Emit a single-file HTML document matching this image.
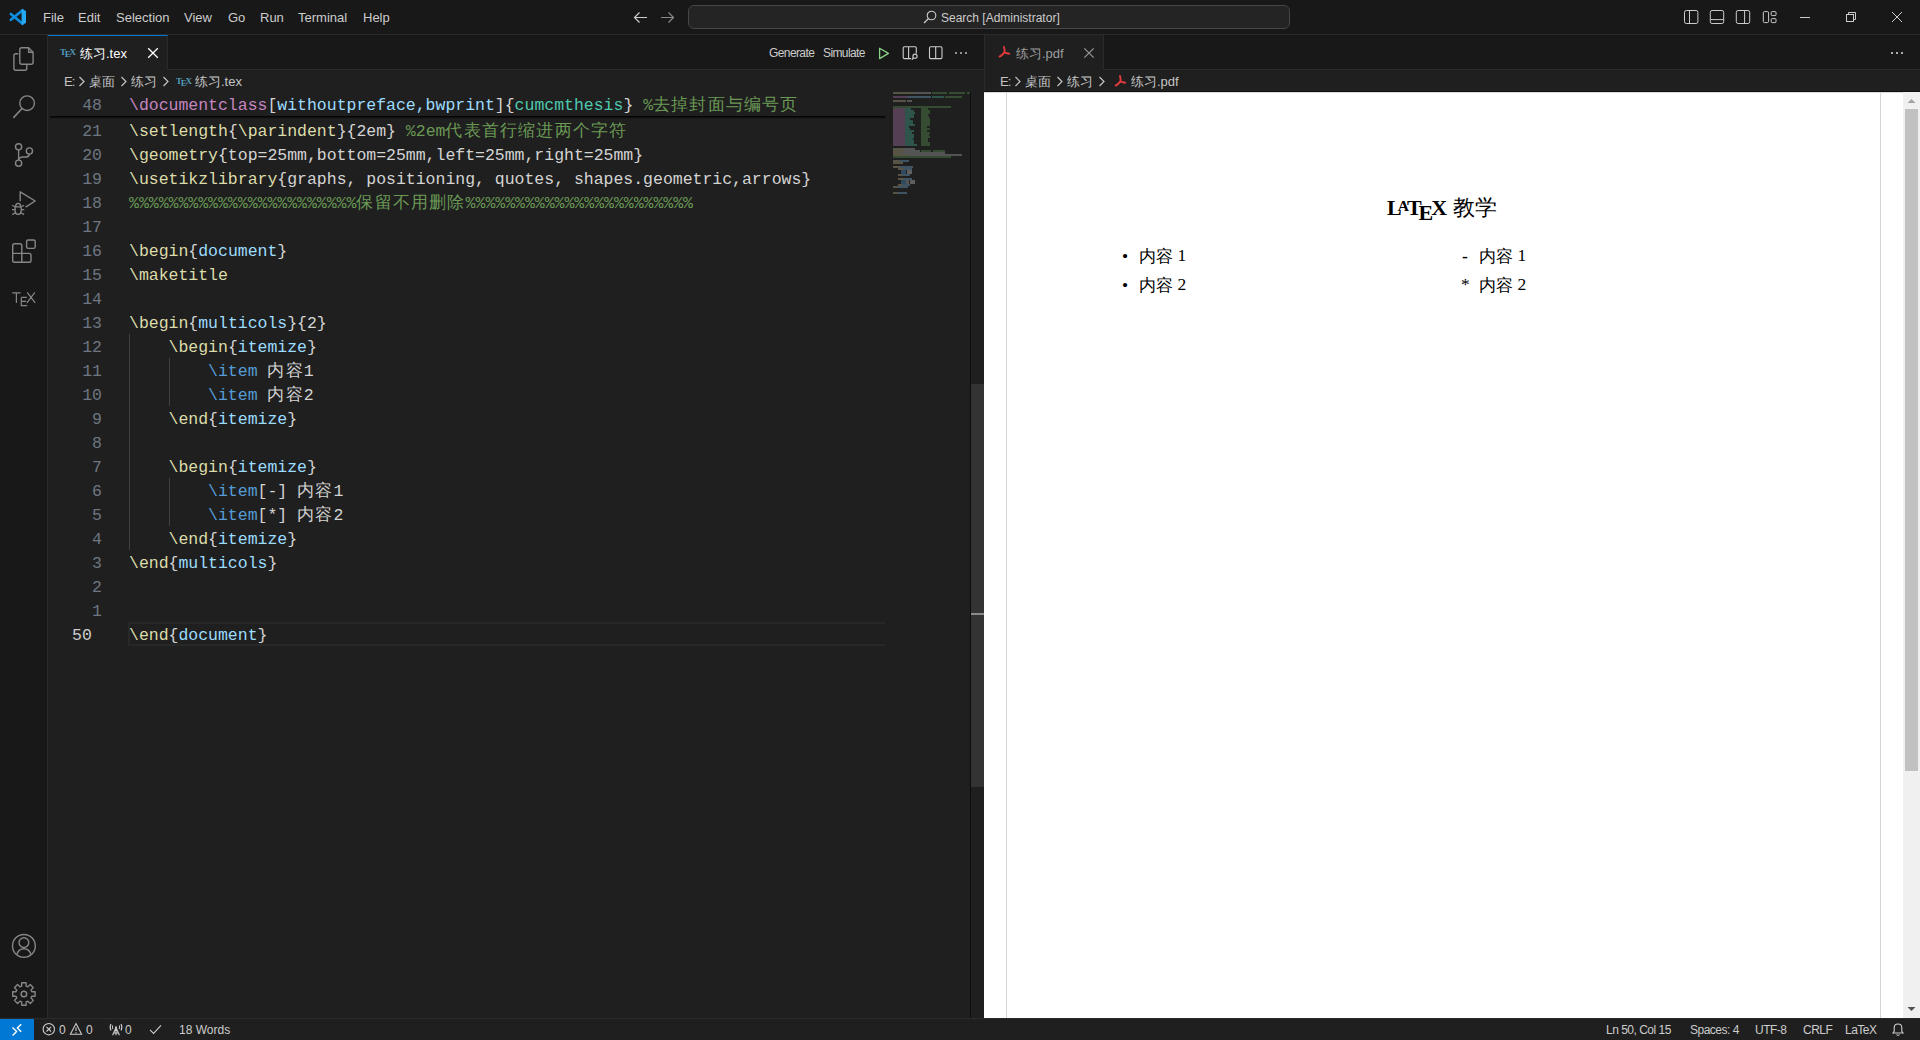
<!DOCTYPE html>
<html><head><meta charset="utf-8">
<style>
*{margin:0;padding:0;box-sizing:border-box}
html,body{width:1920px;height:1040px;overflow:hidden;background:#1f1f1f;font-family:"Liberation Sans",sans-serif;color:#cccccc}
.a{position:absolute}
#title{left:0;top:0;width:1920px;height:35px;background:#181818;border-bottom:1px solid #2b2b2b}
.menu{top:1px;height:34px;line-height:34px;font-size:13px;color:#cccccc}
#act{left:0;top:35px;width:48px;height:983px;background:#181818;border-right:1px solid #2b2b2b}
#status{left:0;top:1018px;width:1920px;height:22px;background:#1f1f1f;border-top:1px solid #2b2b2b;font-size:12px;color:#cccccc}
.st{top:0;height:22px;line-height:22px;white-space:nowrap}
.tabs{top:35px;height:35px;background:#181818;border-bottom:1px solid #2b2b2b}
.crumb{top:71px;height:22px;line-height:22px;font-size:13px;color:#c4c4c4;white-space:nowrap}
.code{font-family:"Liberation Mono",monospace;font-size:16.5px;white-space:pre;color:#d4d4d4;letter-spacing:-0.015px}
.ln{font-family:"Liberation Mono",monospace;font-size:16.5px;color:#6e7681;text-align:right;width:60px}
.row{position:absolute;height:24px;line-height:24px}
.cj{letter-spacing:1.2px}
.k{color:#c586c0}.p{color:#9cdcfe}.t{color:#4ec9b0}.c{color:#6a9955}.f{color:#dcdcaa}.b{color:#569cd6}.w{color:#d4d4d4}
svg{position:absolute;overflow:visible}
.pdfi{font-family:"Liberation Serif",serif;font-size:17.5px;color:#000;line-height:24px;white-space:nowrap}
.pcj{letter-spacing:-0.5px;font-size:17px;position:relative;top:1px;margin-right:1px}

</style></head><body>

<!-- TITLE BAR -->
<div id="title" class="a">
  <svg style="left:0;top:0" width="34" height="34" viewBox="0 0 34 34"><path d="M22.6 10.3 L10.9 19.8 M22.6 23.7 L10.9 14" stroke="#0f8ee0" stroke-width="2.7" stroke-linecap="round"/><path d="M21.6 9 L26 10.9 V23 L21.6 24.9 Z" fill="#26a9f4"/></svg>
  <div class="a menu" style="left:43px">File</div>
  <div class="a menu" style="left:78px">Edit</div>
  <div class="a menu" style="left:116px">Selection</div>
  <div class="a menu" style="left:184px">View</div>
  <div class="a menu" style="left:228px">Go</div>
  <div class="a menu" style="left:260px">Run</div>
  <div class="a menu" style="left:298px">Terminal</div>
  <div class="a menu" style="left:363px">Help</div>
  <!-- nav arrows -->
  <svg style="left:633px;top:11px" width="15" height="13" viewBox="0 0 15 13"><path d="M14 6.5H1.5M6.5 1.5L1.5 6.5L6.5 11.5" stroke="#cccccc" stroke-width="1.2" fill="none"/></svg>
  <svg style="left:660px;top:11px" width="15" height="13" viewBox="0 0 15 13"><path d="M1 6.5H13.5M8.5 1.5L13.5 6.5L8.5 11.5" stroke="#8a8a8a" stroke-width="1.2" fill="none"/></svg>
  <div class="a" style="left:688px;top:5px;width:602px;height:24px;background:#242424;border:1px solid #464646;border-radius:6px"></div>
  <svg style="left:923px;top:10px" width="14" height="14" viewBox="0 0 14 14"><circle cx="8.5" cy="5.5" r="4.3" stroke="#cccccc" stroke-width="1.1" fill="none"/><path d="M5.5 8.5L1 13" stroke="#cccccc" stroke-width="1.2"/></svg>
  <div class="a menu" style="left:941px;font-size:12px">Search [Administrator]</div>
  <svg style="left:0;top:0" width="1920" height="35" viewBox="0 0 1920 35" fill="none" stroke="#cccccc" stroke-width="1">
    <rect x="1684.5" y="10.5" width="13.4" height="13" rx="1.8"/>
    <path d="M1689.5 10.5 V23.5"/>
    <rect x="1710.3" y="10.5" width="13.4" height="13" rx="1.8"/>
    <path d="M1710.3 19.6 H1723.7"/>
    <rect x="1736.3" y="10.5" width="13.4" height="13" rx="1.8"/>
    <path d="M1744.6 10.5 V23.5"/>
    <rect x="1763.3" y="11.6" width="5.3" height="11" rx="1.2"/>
    <rect x="1771.2" y="11.6" width="4.8" height="4" rx="1"/>
    <rect x="1771.2" y="18.6" width="4.8" height="4" rx="1"/>
    <path d="M1800 17.5 H1810"/>
    <rect x="1846.5" y="14.5" width="7" height="7"/>
    <path d="M1848.5 14.5 V12.5 H1855.5 V19.5 H1853.5"/>
    <path d="M1892 12 L1902 22 M1902 12 L1892 22"/>
  </svg>
</div>

<!-- ACTIVITY BAR -->
<div id="act" class="a"></div>
<svg style="left:0;top:0" width="48" height="1040" viewBox="0 0 48 1040" fill="none" stroke="#868686" stroke-width="1.4" stroke-linejoin="round">
  <!-- files -->
  <path d="M18.3 53.7 H15.8 Q13.9 53.7 13.9 55.6 V68.3 Q13.9 70.2 15.8 70.2 H24.9 Q26.8 70.2 26.8 68.3 V64.9"/>
  <path d="M21.7 47.7 H28.6 L33.1 52.2 V62.3 Q33.1 64.2 31.2 64.2 H21.7 Q19.8 64.2 19.8 62.3 V49.6 Q19.8 47.7 21.7 47.7 Z"/>
  <path d="M28.6 47.9 V52.2 H33" />
  <!-- search -->
  <circle cx="27.1" cy="103.2" r="7.3"/>
  <path d="M22 108.5 L13.8 117.4" stroke-width="1.6" stroke-linecap="round"/>
  <!-- source control -->
  <circle cx="18.6" cy="146.8" r="3.1"/>
  <circle cx="18.6" cy="163.2" r="3.1"/>
  <circle cx="29.4" cy="151" r="3.1"/>
  <path d="M18.6 149.9 V160.1"/>
  <path d="M29.4 154.1 Q29.2 156.6 26.4 157 H22.4 Q18.8 157.4 18.6 160"/>
  <!-- run & debug -->
  <path d="M20.2 201.2 V191.8 L35.2 201 L25.6 207.2"/>
  <path d="M15.6 206.9 Q15.6 203.4 18.15 203.4 Q20.7 203.4 20.7 206.9 M15.1 206.9 H21.2 M15.1 206.9 V210.4 Q15.1 214.2 18.15 214.2 Q21.2 214.2 21.2 210.4 V206.9"/>
  <path d="M12.2 205.2 L15 206.8 M24.1 205.2 L21.3 206.8 M12 209.7 H15 M24.3 209.7 H21.3 M12.3 214.6 L15.2 212.8 M24 214.6 L21.1 212.8" stroke-width="1.3"/>
  <!-- extensions -->
  <rect x="26.6" y="240" width="8.6" height="8.4" rx="1.6"/>
  <path d="M14.5 243.8 H20 Q21.8 243.8 21.8 245.6 V253.4 H29.2 Q31 253.4 31 255.2 V260.4 Q31 262.2 29.2 262.2 H14.5 Q12.7 262.2 12.7 260.4 V245.6 Q12.7 243.8 14.5 243.8 Z M12.7 253.4 H21.8 V262.2"/>
  <!-- tex -->
  <path d="M12.2 292.9 H20.6 M16.4 292.9 V302.9 M21.3 297.4 V305.6 H27.2 M21.3 297.4 H26.8 M21.3 301.4 H26.2 M27.2 292.3 L35.2 302.9 M34.9 292.3 L26.9 302.9" stroke-width="1.2" stroke-linejoin="miter"/>
  <!-- account -->
  <circle cx="23.9" cy="945.9" r="11.4"/>
  <circle cx="23.9" cy="942.6" r="4.9"/>
  <path d="M16.8 954.6 Q18.6 948.8 23.9 948.8 Q29.2 948.8 31 954.6"/>
  <!-- settings -->
  <path d="M21.64 986.12 L21.72 982.81 L26.08 982.81 L26.16 986.12 L27.88 986.83 L30.27 984.55 L33.35 987.63 L31.07 990.02 L31.78 991.74 L35.09 991.82 L35.09 996.18 L31.78 996.26 L31.07 997.98 L33.35 1000.37 L30.27 1003.45 L27.88 1001.17 L26.16 1001.88 L26.08 1005.19 L21.72 1005.19 L21.64 1001.88 L19.92 1001.17 L17.53 1003.45 L14.45 1000.37 L16.73 997.98 L16.02 996.26 L12.71 996.18 L12.71 991.82 L16.02 991.74 L16.73 990.02 L14.45 987.63 L17.53 984.55 L19.92 986.83 Z"/>
  <circle cx="23.9" cy="994" r="2.8"/>
</svg>

<!-- LEFT EDITOR GROUP -->
<div class="a tabs" style="left:48px;width:936px"></div>
<div class="a" style="left:48px;top:35px;width:120px;height:35px;background:#1f1f1f;border-top:1px solid #0078d4;border-right:1px solid #2b2b2b"></div>
<div class="a" style="left:48px;top:92px;width:936px;height:926px;background:#1f1f1f"></div>
<!-- tab 1 content -->
<div class="a" style="left:60px;top:47px;font-family:'Liberation Serif',serif;font-size:9px;font-weight:bold;color:#519aba;white-space:nowrap;letter-spacing:-1.3px">T<span style="position:relative;top:2px">E</span>X</div>
<div class="a" style="left:80px;top:36px;height:35px;line-height:35px;font-size:13px;color:#ffffff;white-space:nowrap">练习.tex</div>
<svg style="left:147px;top:47px" width="12" height="12" viewBox="0 0 12 12"><path d="M1.2 1.2 L10.8 10.8 M10.8 1.2 L1.2 10.8" stroke="#ffffff" stroke-width="1.3"/></svg>
<!-- tab actions -->
<div class="a" style="left:769px;top:36px;height:35px;line-height:35px;font-size:12px;color:#cccccc;white-space:nowrap;letter-spacing:-0.6px">Generate</div>
<div class="a" style="left:823px;top:36px;height:35px;line-height:35px;font-size:12px;color:#cccccc;white-space:nowrap;letter-spacing:-0.6px">Simulate</div>
<svg style="left:0;top:0" width="984" height="70" viewBox="0 0 984 70" fill="none" stroke-width="1.1">
  <path d="M879.6 48.3 V58.6 L888.4 53.4 Z" stroke="#89d185" stroke-width="1.3" stroke-linejoin="round"/>
  <path d="M911 58.6 H904.3 Q903.2 58.6 903.2 57.5 V47.8 Q903.2 46.7 904.3 46.7 H915.2 Q916.3 46.7 916.3 47.8 V53.5 M908.6 46.7 V58.6" stroke="#cccccc"/>
  <circle cx="915" cy="56.2" r="2.1" stroke="#cccccc"/>
  <path d="M913.5 57.8 L911.8 59.6" stroke="#cccccc" stroke-width="1.3"/>
  <rect x="929.5" y="46.8" width="12.5" height="11.8" rx="1.1" stroke="#cccccc"/>
  <path d="M935.7 46.8 V58.6" stroke="#cccccc"/>
  <circle cx="956" cy="53" r="0.9" fill="#cccccc" stroke="none"/>
  <circle cx="961" cy="53" r="0.9" fill="#cccccc" stroke="none"/>
  <circle cx="966" cy="53" r="0.9" fill="#cccccc" stroke="none"/>
</svg>
<!-- breadcrumbs 1 -->
<div class="a crumb" style="left:64px;letter-spacing:-0.8px">E:</div>
<div class="a crumb" style="left:89px">桌面</div>
<div class="a crumb" style="left:131px">练习</div>
<div class="a" style="left:176px;top:75.5px;font-family:'Liberation Serif',serif;font-size:9px;font-weight:bold;color:#519aba;white-space:nowrap;letter-spacing:-1.3px">T<span style="position:relative;top:2px">E</span>X</div>
<div class="a crumb" style="left:195px">练习.tex</div>
<svg style="left:0;top:70px" width="984" height="22" viewBox="0 0 984 22" fill="none" stroke="#c4c4c4" stroke-width="1.2">
  <path d="M79.5 7 L84 11.5 L79.5 16"/><path d="M121.5 7 L126 11.5 L121.5 16"/><path d="M163.5 7 L168 11.5 L163.5 16"/>
</svg>


<!-- EDITOR CONTENT -->
<div class="a" style="left:129px;top:334px;width:1px;height:216px;background:#404040"></div>
<div class="a" style="left:169px;top:358px;width:1px;height:48px;background:#404040"></div>
<div class="a" style="left:169px;top:478px;width:1px;height:48px;background:#404040"></div>
<div class="a" style="left:128px;top:622px;width:757px;height:24px;border:2px solid #282828;border-right:none"></div>
<div class="row ln" style="left:42px;top:94px">48</div>
<div class="row code" style="left:129px;top:94px"><span class="k">\documentclass</span><span class="w">[</span><span class="p">withoutpreface,bwprint</span><span class="w">]{</span><span class="t">cumcmthesis</span><span class="w">} </span><span class="c">%</span><span class="c cj">去掉封面与编号页</span></div>
<div class="row ln" style="left:42px;top:120px">21</div>
<div class="row code" style="left:129px;top:120px"><span class="f">\setlength</span><span class="w">{</span><span class="f">\parindent</span><span class="w">}{2em} </span><span class="c">%2em</span><span class="c cj">代表首行缩进两个字符</span></div>
<div class="row ln" style="left:42px;top:144px">20</div>
<div class="row code" style="left:129px;top:144px"><span class="f">\geometry</span><span class="w">{top=25mm,bottom=25mm,left=25mm,right=25mm}</span></div>
<div class="row ln" style="left:42px;top:168px">19</div>
<div class="row code" style="left:129px;top:168px"><span class="f">\usetikzlibrary</span><span class="w">{graphs, positioning, quotes, shapes.geometric,arrows}</span></div>
<div class="row ln" style="left:42px;top:192px">18</div>
<div class="row code" style="left:129px;top:192px"><span class="c">%%%%%%%%%%%%%%%%%%%%%%%</span><span class="c cj">保留不用删除</span><span class="c">%%%%%%%%%%%%%%%%%%%%%%%</span></div>
<div class="row ln" style="left:42px;top:216px">17</div>
<div class="row ln" style="left:42px;top:240px">16</div>
<div class="row code" style="left:129px;top:240px"><span class="f">\begin</span><span class="w">{</span><span class="p">document</span><span class="w">}</span></div>
<div class="row ln" style="left:42px;top:264px">15</div>
<div class="row code" style="left:129px;top:264px"><span class="f">\maketitle</span></div>
<div class="row ln" style="left:42px;top:288px">14</div>
<div class="row ln" style="left:42px;top:312px">13</div>
<div class="row code" style="left:129px;top:312px"><span class="f">\begin</span><span class="w">{</span><span class="p">multicols</span><span class="w">}{2}</span></div>
<div class="row ln" style="left:42px;top:336px">12</div>
<div class="row code" style="left:129px;top:336px"><span class="w">    </span><span class="f">\begin</span><span class="w">{</span><span class="p">itemize</span><span class="w">}</span></div>
<div class="row ln" style="left:42px;top:360px">11</div>
<div class="row code" style="left:129px;top:360px"><span class="w">        </span><span class="b">\item</span><span class="w"> </span><span class="w cj">内容</span><span class="w">1</span></div>
<div class="row ln" style="left:42px;top:384px">10</div>
<div class="row code" style="left:129px;top:384px"><span class="w">        </span><span class="b">\item</span><span class="w"> </span><span class="w cj">内容</span><span class="w">2</span></div>
<div class="row ln" style="left:42px;top:408px">9</div>
<div class="row code" style="left:129px;top:408px"><span class="w">    </span><span class="f">\end</span><span class="w">{</span><span class="p">itemize</span><span class="w">}</span></div>
<div class="row ln" style="left:42px;top:432px">8</div>
<div class="row ln" style="left:42px;top:456px">7</div>
<div class="row code" style="left:129px;top:456px"><span class="w">    </span><span class="f">\begin</span><span class="w">{</span><span class="p">itemize</span><span class="w">}</span></div>
<div class="row ln" style="left:42px;top:480px">6</div>
<div class="row code" style="left:129px;top:480px"><span class="w">        </span><span class="b">\item</span><span class="w">[-] </span><span class="w cj">内容</span><span class="w">1</span></div>
<div class="row ln" style="left:42px;top:504px">5</div>
<div class="row code" style="left:129px;top:504px"><span class="w">        </span><span class="b">\item</span><span class="w">[*] </span><span class="w cj">内容</span><span class="w">2</span></div>
<div class="row ln" style="left:42px;top:528px">4</div>
<div class="row code" style="left:129px;top:528px"><span class="w">    </span><span class="f">\end</span><span class="w">{</span><span class="p">itemize</span><span class="w">}</span></div>
<div class="row ln" style="left:42px;top:552px">3</div>
<div class="row code" style="left:129px;top:552px"><span class="f">\end</span><span class="w">{</span><span class="p">multicols</span><span class="w">}</span></div>
<div class="row ln" style="left:42px;top:576px">2</div>
<div class="row ln" style="left:42px;top:600px">1</div>
<div class="row ln" style="left:72px;top:624px;text-align:left;color:#cccccc">50</div>
<div class="row code" style="left:129px;top:624px"><span class="f">\end</span><span class="w">{</span><span class="p">document</span><span class="w">}</span></div>

<div class="a" style="left:50px;top:116px;width:835px;height:3px;background:linear-gradient(#000000,rgba(0,0,0,0))"></div>


<!-- left scrollbar -->
<div class="a" style="left:970px;top:92px;width:1px;height:926px;background:#0b0d10"></div>
<div class="a" style="left:971px;top:384px;width:13px;height:403px;background:#333333"></div>
<div class="a" style="left:971px;top:613px;width:13px;height:2px;background:#8a8a8a"></div>
<div class="a" style="left:893.0px;top:92px;width:21.0px;height:1.5px;background:#8f8a6c;opacity:.5"></div>
<div class="a" style="left:914.0px;top:92px;width:17.0px;height:1.5px;background:#8a8a8a;opacity:.5"></div>
<div class="a" style="left:932.0px;top:92px;width:15.0px;height:1.5px;background:#4d7a45;opacity:.5"></div>
<div class="a" style="left:949.0px;top:92px;width:16.0px;height:1.5px;background:#4d7a45;opacity:.5"></div>
<div class="a" style="left:967.0px;top:92px;width:3.0px;height:1.5px;background:#4d7a45;opacity:.5"></div>
<div class="a" style="left:893.0px;top:96px;width:15.0px;height:1.5px;background:#8c5f8a;opacity:.5"></div>
<div class="a" style="left:908.0px;top:96px;width:23.0px;height:1.5px;background:#5f8aa6;opacity:.5"></div>
<div class="a" style="left:931.5px;top:96px;width:12.5px;height:1.5px;background:#3f8a7a;opacity:.5"></div>
<div class="a" style="left:945.0px;top:96px;width:17.0px;height:1.5px;background:#4d7a45;opacity:.5"></div>
<div class="a" style="left:893.0px;top:100px;width:13.0px;height:1.5px;background:#8f8a6c;opacity:.5"></div>
<div class="a" style="left:907.0px;top:100px;width:5.0px;height:1.5px;background:#8a8a8a;opacity:.5"></div>
<div class="a" style="left:893.0px;top:106px;width:58.0px;height:1.5px;background:#4d7a45;opacity:.5"></div>
<div class="a" style="left:893.0px;top:108px;width:11.5px;height:1.5px;background:#8c5f8a;opacity:.5"></div>
<div class="a" style="left:904.5px;top:108px;width:6.0px;height:1.5px;background:#3f8a7a;opacity:.5"></div>
<div class="a" style="left:921.0px;top:108px;width:7.0px;height:1.5px;background:#4d7a45;opacity:.5"></div>
<div class="a" style="left:893.0px;top:110px;width:11.5px;height:1.5px;background:#8c5f8a;opacity:.5"></div>
<div class="a" style="left:904.5px;top:110px;width:9.0px;height:1.5px;background:#3f8a7a;opacity:.5"></div>
<div class="a" style="left:921.0px;top:110px;width:9.0px;height:1.5px;background:#4d7a45;opacity:.5"></div>
<div class="a" style="left:893.0px;top:112px;width:11.5px;height:1.5px;background:#8c5f8a;opacity:.5"></div>
<div class="a" style="left:904.5px;top:112px;width:10.0px;height:1.5px;background:#3f8a7a;opacity:.5"></div>
<div class="a" style="left:921.0px;top:112px;width:9.0px;height:1.5px;background:#4d7a45;opacity:.5"></div>
<div class="a" style="left:893.0px;top:114px;width:11.5px;height:1.5px;background:#8c5f8a;opacity:.5"></div>
<div class="a" style="left:904.5px;top:114px;width:9.0px;height:1.5px;background:#3f8a7a;opacity:.5"></div>
<div class="a" style="left:921.0px;top:114px;width:7.0px;height:1.5px;background:#4d7a45;opacity:.5"></div>
<div class="a" style="left:893.0px;top:116px;width:11.5px;height:1.5px;background:#8c5f8a;opacity:.5"></div>
<div class="a" style="left:904.5px;top:116px;width:9.0px;height:1.5px;background:#3f8a7a;opacity:.5"></div>
<div class="a" style="left:921.0px;top:116px;width:8.0px;height:1.5px;background:#4d7a45;opacity:.5"></div>
<div class="a" style="left:893.0px;top:118px;width:11.5px;height:1.5px;background:#8c5f8a;opacity:.5"></div>
<div class="a" style="left:904.5px;top:118px;width:5.0px;height:1.5px;background:#3f8a7a;opacity:.5"></div>
<div class="a" style="left:921.0px;top:118px;width:9.0px;height:1.5px;background:#4d7a45;opacity:.5"></div>
<div class="a" style="left:893.0px;top:120px;width:11.5px;height:1.5px;background:#8c5f8a;opacity:.5"></div>
<div class="a" style="left:904.5px;top:120px;width:8.0px;height:1.5px;background:#3f8a7a;opacity:.5"></div>
<div class="a" style="left:921.0px;top:120px;width:9.0px;height:1.5px;background:#4d7a45;opacity:.5"></div>
<div class="a" style="left:893.0px;top:122px;width:11.5px;height:1.5px;background:#8c5f8a;opacity:.5"></div>
<div class="a" style="left:904.5px;top:122px;width:8.0px;height:1.5px;background:#3f8a7a;opacity:.5"></div>
<div class="a" style="left:921.0px;top:122px;width:9.0px;height:1.5px;background:#4d7a45;opacity:.5"></div>
<div class="a" style="left:893.0px;top:124px;width:11.5px;height:1.5px;background:#8c5f8a;opacity:.5"></div>
<div class="a" style="left:904.5px;top:124px;width:10.0px;height:1.5px;background:#3f8a7a;opacity:.5"></div>
<div class="a" style="left:921.0px;top:124px;width:9.0px;height:1.5px;background:#4d7a45;opacity:.5"></div>
<div class="a" style="left:893.0px;top:126px;width:11.5px;height:1.5px;background:#8c5f8a;opacity:.5"></div>
<div class="a" style="left:904.5px;top:126px;width:4.0px;height:1.5px;background:#3f8a7a;opacity:.5"></div>
<div class="a" style="left:921.0px;top:126px;width:6.0px;height:1.5px;background:#4d7a45;opacity:.5"></div>
<div class="a" style="left:893.0px;top:128px;width:11.5px;height:1.5px;background:#8c5f8a;opacity:.5"></div>
<div class="a" style="left:904.5px;top:128px;width:5.0px;height:1.5px;background:#3f8a7a;opacity:.5"></div>
<div class="a" style="left:921.0px;top:128px;width:9.0px;height:1.5px;background:#4d7a45;opacity:.5"></div>
<div class="a" style="left:893.0px;top:130px;width:11.5px;height:1.5px;background:#8c5f8a;opacity:.5"></div>
<div class="a" style="left:904.5px;top:130px;width:9.0px;height:1.5px;background:#3f8a7a;opacity:.5"></div>
<div class="a" style="left:921.0px;top:130px;width:6.0px;height:1.5px;background:#4d7a45;opacity:.5"></div>
<div class="a" style="left:893.0px;top:132px;width:11.5px;height:1.5px;background:#8c5f8a;opacity:.5"></div>
<div class="a" style="left:904.5px;top:132px;width:7.0px;height:1.5px;background:#3f8a7a;opacity:.5"></div>
<div class="a" style="left:921.0px;top:132px;width:9.0px;height:1.5px;background:#4d7a45;opacity:.5"></div>
<div class="a" style="left:893.0px;top:134px;width:11.5px;height:1.5px;background:#8c5f8a;opacity:.5"></div>
<div class="a" style="left:904.5px;top:134px;width:9.0px;height:1.5px;background:#3f8a7a;opacity:.5"></div>
<div class="a" style="left:921.0px;top:134px;width:8.0px;height:1.5px;background:#4d7a45;opacity:.5"></div>
<div class="a" style="left:893.0px;top:136px;width:11.5px;height:1.5px;background:#8c5f8a;opacity:.5"></div>
<div class="a" style="left:904.5px;top:136px;width:9.0px;height:1.5px;background:#3f8a7a;opacity:.5"></div>
<div class="a" style="left:921.0px;top:136px;width:9.0px;height:1.5px;background:#4d7a45;opacity:.5"></div>
<div class="a" style="left:893.0px;top:138px;width:11.5px;height:1.5px;background:#8c5f8a;opacity:.5"></div>
<div class="a" style="left:904.5px;top:138px;width:8.0px;height:1.5px;background:#3f8a7a;opacity:.5"></div>
<div class="a" style="left:921.0px;top:138px;width:7.0px;height:1.5px;background:#4d7a45;opacity:.5"></div>
<div class="a" style="left:893.0px;top:140px;width:11.5px;height:1.5px;background:#8c5f8a;opacity:.5"></div>
<div class="a" style="left:904.5px;top:140px;width:9.0px;height:1.5px;background:#3f8a7a;opacity:.5"></div>
<div class="a" style="left:921.0px;top:140px;width:7.0px;height:1.5px;background:#4d7a45;opacity:.5"></div>
<div class="a" style="left:893.0px;top:142px;width:11.5px;height:1.5px;background:#8c5f8a;opacity:.5"></div>
<div class="a" style="left:904.5px;top:142px;width:9.0px;height:1.5px;background:#3f8a7a;opacity:.5"></div>
<div class="a" style="left:921.0px;top:142px;width:9.0px;height:1.5px;background:#4d7a45;opacity:.5"></div>
<div class="a" style="left:893.0px;top:144px;width:11.5px;height:1.5px;background:#8c5f8a;opacity:.5"></div>
<div class="a" style="left:904.5px;top:144px;width:12.0px;height:1.5px;background:#3f8a7a;opacity:.5"></div>
<div class="a" style="left:921.0px;top:144px;width:9.0px;height:1.5px;background:#4d7a45;opacity:.5"></div>
<div class="a" style="left:893.0px;top:148px;width:11.0px;height:1.5px;background:#8f8a6c;opacity:.5"></div>
<div class="a" style="left:904.0px;top:148px;width:11.0px;height:1.5px;background:#8a8a8a;opacity:.5"></div>
<div class="a" style="left:893.0px;top:150px;width:11.0px;height:1.5px;background:#8f8a6c;opacity:.5"></div>
<div class="a" style="left:904.0px;top:150px;width:16.0px;height:1.5px;background:#8a8a8a;opacity:.5"></div>
<div class="a" style="left:921.0px;top:150px;width:10.0px;height:1.5px;background:#4d7a45;opacity:.5"></div>
<div class="a" style="left:933.0px;top:150px;width:12.0px;height:1.5px;background:#4d7a45;opacity:.5"></div>
<div class="a" style="left:893.0px;top:152px;width:9.0px;height:1.5px;background:#8f8a6c;opacity:.5"></div>
<div class="a" style="left:902.0px;top:152px;width:43.0px;height:1.5px;background:#8a8a8a;opacity:.5"></div>
<div class="a" style="left:893.0px;top:154px;width:15.0px;height:1.5px;background:#8f8a6c;opacity:.5"></div>
<div class="a" style="left:908.0px;top:154px;width:54.0px;height:1.5px;background:#8a8a8a;opacity:.5"></div>
<div class="a" style="left:893.0px;top:156px;width:58.0px;height:1.5px;background:#4d7a45;opacity:.5"></div>
<div class="a" style="left:893.0px;top:160px;width:6.6px;height:1.5px;background:#8f8a6c;opacity:.5"></div>
<div class="a" style="left:899.6px;top:160px;width:9.4px;height:1.5px;background:#5f8aa6;opacity:.5"></div>
<div class="a" style="left:893.0px;top:162px;width:10.0px;height:1.5px;background:#8f8a6c;opacity:.5"></div>
<div class="a" style="left:893.0px;top:166px;width:6.6px;height:1.5px;background:#8f8a6c;opacity:.5"></div>
<div class="a" style="left:899.6px;top:166px;width:13.4px;height:1.5px;background:#5f8aa6;opacity:.5"></div>
<div class="a" style="left:897.5px;top:168px;width:6.5px;height:1.5px;background:#8f8a6c;opacity:.5"></div>
<div class="a" style="left:904.0px;top:168px;width:7.5px;height:1.5px;background:#5f8aa6;opacity:.5"></div>
<div class="a" style="left:901.0px;top:170px;width:5.3px;height:1.5px;background:#3f73a0;opacity:.5"></div>
<div class="a" style="left:907.0px;top:170px;width:4.5px;height:1.5px;background:#a0a0a0;opacity:.5"></div>
<div class="a" style="left:901.0px;top:172px;width:5.3px;height:1.5px;background:#3f73a0;opacity:.5"></div>
<div class="a" style="left:907.0px;top:172px;width:4.5px;height:1.5px;background:#a0a0a0;opacity:.5"></div>
<div class="a" style="left:897.5px;top:174px;width:4.5px;height:1.5px;background:#8f8a6c;opacity:.5"></div>
<div class="a" style="left:902.0px;top:174px;width:8.0px;height:1.5px;background:#5f8aa6;opacity:.5"></div>
<div class="a" style="left:897.5px;top:178px;width:6.5px;height:1.5px;background:#8f8a6c;opacity:.5"></div>
<div class="a" style="left:904.0px;top:178px;width:7.5px;height:1.5px;background:#5f8aa6;opacity:.5"></div>
<div class="a" style="left:901.0px;top:180px;width:5.3px;height:1.5px;background:#3f73a0;opacity:.5"></div>
<div class="a" style="left:906.3px;top:180px;width:2.7px;height:1.5px;background:#8a8a8a;opacity:.5"></div>
<div class="a" style="left:910.0px;top:180px;width:4.7px;height:1.5px;background:#a0a0a0;opacity:.5"></div>
<div class="a" style="left:901.0px;top:182px;width:5.3px;height:1.5px;background:#3f73a0;opacity:.5"></div>
<div class="a" style="left:906.3px;top:182px;width:2.7px;height:1.5px;background:#8a8a8a;opacity:.5"></div>
<div class="a" style="left:910.0px;top:182px;width:4.7px;height:1.5px;background:#a0a0a0;opacity:.5"></div>
<div class="a" style="left:897.5px;top:184px;width:4.5px;height:1.5px;background:#8f8a6c;opacity:.5"></div>
<div class="a" style="left:902.0px;top:184px;width:8.0px;height:1.5px;background:#5f8aa6;opacity:.5"></div>
<div class="a" style="left:893.0px;top:186px;width:4.5px;height:1.5px;background:#8f8a6c;opacity:.5"></div>
<div class="a" style="left:897.5px;top:186px;width:10.5px;height:1.5px;background:#5f8aa6;opacity:.5"></div>
<div class="a" style="left:893.0px;top:192px;width:4.5px;height:1.5px;background:#8f8a6c;opacity:.5"></div>
<div class="a" style="left:897.5px;top:192px;width:9.5px;height:1.5px;background:#5f8aa6;opacity:.5"></div>


<!-- RIGHT EDITOR GROUP -->
<div class="a tabs" style="left:984px;width:936px;border-left:1px solid #2b2b2b"></div>
<div class="a" style="left:984px;top:35px;width:120px;height:35px;background:#1f1f1f;border-left:1px solid #2b2b2b;border-right:1px solid #2b2b2b"></div>
<div class="a" style="left:984px;top:70px;width:936px;height:22px;background:#1f1f1f;border-left:1px solid #2b2b2b"></div>
<div class="a" style="left:984px;top:92px;width:936px;height:926px;background:#ffffff"></div>
<div class="a" style="left:984px;top:91px;width:936px;height:2px;background:linear-gradient(rgba(0,0,0,0.6),rgba(0,0,0,0))"></div>
<!-- tab 2 -->
<svg style="left:997px;top:45px" width="14" height="14" viewBox="0 0 14 14" fill="none" stroke="#e0393e" stroke-width="1.9" stroke-linecap="round"><path d="M7 2 Q7.8 4.6 7.4 7.4 Q5.6 10 2.6 11.6 M7.4 7.4 Q9.8 8.6 12.2 8.7"/></svg>
<div class="a" style="left:1016px;top:36px;height:35px;line-height:35px;font-size:13px;color:#9d9d9d;white-space:nowrap">练习.pdf</div>
<svg style="left:1083px;top:47px" width="12" height="12" viewBox="0 0 12 12"><path d="M1.3 1.3 L10.7 10.7 M10.7 1.3 L1.3 10.7" stroke="#9d9d9d" stroke-width="1.1"/></svg>
<svg style="left:1886px;top:45px" width="20" height="14" viewBox="0 0 20 14"><circle cx="6" cy="8" r="1" fill="#e0e0e0"/><circle cx="11" cy="8" r="1" fill="#e0e0e0"/><circle cx="16" cy="8" r="1" fill="#e0e0e0"/></svg>
<!-- breadcrumbs 2 -->
<div class="a crumb" style="left:1000px;letter-spacing:-0.8px">E:</div>
<div class="a crumb" style="left:1025px">桌面</div>
<div class="a crumb" style="left:1067px">练习</div>
<svg style="left:1113px;top:74px" width="14" height="14" viewBox="0 0 14 14" fill="none" stroke="#e0393e" stroke-width="1.9" stroke-linecap="round"><path d="M7 2 Q7.8 4.6 7.4 7.4 Q5.6 10 2.6 11.6 M7.4 7.4 Q9.8 8.6 12.2 8.7"/></svg>
<div class="a crumb" style="left:1131px">练习.pdf</div>
<svg style="left:984px;top:70px" width="936" height="22" viewBox="984 0 936 22" fill="none" stroke="#c4c4c4" stroke-width="1.2">
  <path d="M1015.5 7 L1020 11.5 L1015.5 16"/><path d="M1057.5 7 L1062 11.5 L1057.5 16"/><path d="M1099.5 7 L1104 11.5 L1099.5 16"/>
</svg>
<!-- pdf page -->
<div class="a" style="left:1006px;top:92px;width:1px;height:926px;background:#d4d4d4"></div>
<div class="a" style="left:1880px;top:92px;width:1px;height:926px;background:#d4d4d4"></div>
<div class="a" style="left:1903px;top:92px;width:17px;height:926px;background:#f0f0f0"></div>
<div class="a" style="left:1905px;top:109px;width:13px;height:662px;background:#c1c1c1"></div>
<svg style="left:1903px;top:92px" width="17" height="926" viewBox="0 0 17 926"><path d="M4.5 11 L8.5 7 L12.5 11 Z" fill="#a3a3a3"/><path d="M4.5 915 L8.5 919 L12.5 915 Z" fill="#505050"/></svg>
<div class="a" style="left:1387px;top:192.5px;font-family:'Liberation Serif',serif;font-weight:bold;font-size:22px;color:#000;white-space:nowrap;line-height:30px">L<span style="font-size:15.5px;position:relative;top:-4px;margin-left:-4px;margin-right:-2px">A</span>T<span style="position:relative;top:5px;margin-left:-3px;margin-right:-2px">E</span>X <span style="font-weight:normal;letter-spacing:0px">教学</span></div>
<div class="pdfi a" style="left:1122px;top:244px">•</div>
<div class="pdfi a" style="left:1139px;top:243px"><span class="pcj">内容</span> 1</div>
<div class="pdfi a" style="left:1122px;top:273px">•</div>
<div class="pdfi a" style="left:1139px;top:272px"><span class="pcj">内容</span> 2</div>
<div class="pdfi a" style="left:1462px;top:244px;font-weight:bold">-</div>
<div class="pdfi a" style="left:1479px;top:243px"><span class="pcj">内容</span> 1</div>
<div class="pdfi a" style="left:1461px;top:272px">*</div>
<div class="pdfi a" style="left:1479px;top:272px"><span class="pcj">内容</span> 2</div>

<!-- STATUS BAR -->
<div id="status" class="a">
  <div class="a" style="left:0;top:0px;width:34px;height:21px;background:#0078d4"></div>
  <svg style="left:0;top:-1px" width="240" height="22" viewBox="0 0 240 22" fill="none" stroke="#ffffff" stroke-width="1.2">
    <path d="M12.5 9.4 L16.6 13.4 L12.6 17.5 M21.2 6.2 L17.4 10 L21.2 13.8" stroke-width="1.4"/>
  </svg>
  <svg style="left:0;top:-3px" width="240" height="22" viewBox="0 0 240 22" fill="none" stroke="#cccccc" stroke-width="1.1">
    <circle cx="48.8" cy="13.2" r="5.7"/>
    <path d="M46.5 10.9 L51.1 15.5 M51.1 10.9 L46.5 15.5"/>
    <path d="M76 7.6 L81.6 18.2 H70.4 Z M76 11.4 V15 M76 16.2 V17.2"/>
    <path d="M116 12.5 V19.2 M116 11.5 L112.6 19.2 M116 11.5 L119.4 19.2 M113.4 17 H118.6"/>
    <path d="M112.8 9.5 Q111.8 11.3 112.8 13.1 M119.2 9.5 Q120.2 11.3 119.2 13.1 M111 8 Q109.2 11.3 111 14.6 M121 8 Q122.8 11.3 121 14.6"/>
    <circle cx="116" cy="11.3" r="1" fill="#cccccc" stroke="none"/>
    <path d="M150 13.8 L153.6 17.4 L161 9.4"/>
  </svg>
  <div class="a st" style="left:59px">0</div>
  <div class="a st" style="left:86px">0</div>
  <div class="a st" style="left:125px">0</div>
  <div class="a st" style="left:179px">18 Words</div>
  <div class="a st" style="left:1606px;letter-spacing:-0.5px">Ln 50, Col 15</div>
  <div class="a st" style="left:1690px;letter-spacing:-0.5px">Spaces: 4</div>
  <div class="a st" style="left:1755px;letter-spacing:-0.5px">UTF-8</div>
  <div class="a st" style="left:1803px;letter-spacing:-0.5px">CRLF</div>
  <div class="a st" style="left:1845px;letter-spacing:-0.5px">LaTeX</div>
  <svg style="left:1890px;top:2px" width="16" height="16" viewBox="0 0 16 16" fill="none" stroke="#cccccc" stroke-width="1.1"><path d="M3 12 H13 L11.8 10.3 V6.8 Q11.8 3 8 3 Q4.2 3 4.2 6.8 V10.3 Z M6.5 13.5 Q8 15.2 9.5 13.5"/></svg>
</div>

</body></html>
